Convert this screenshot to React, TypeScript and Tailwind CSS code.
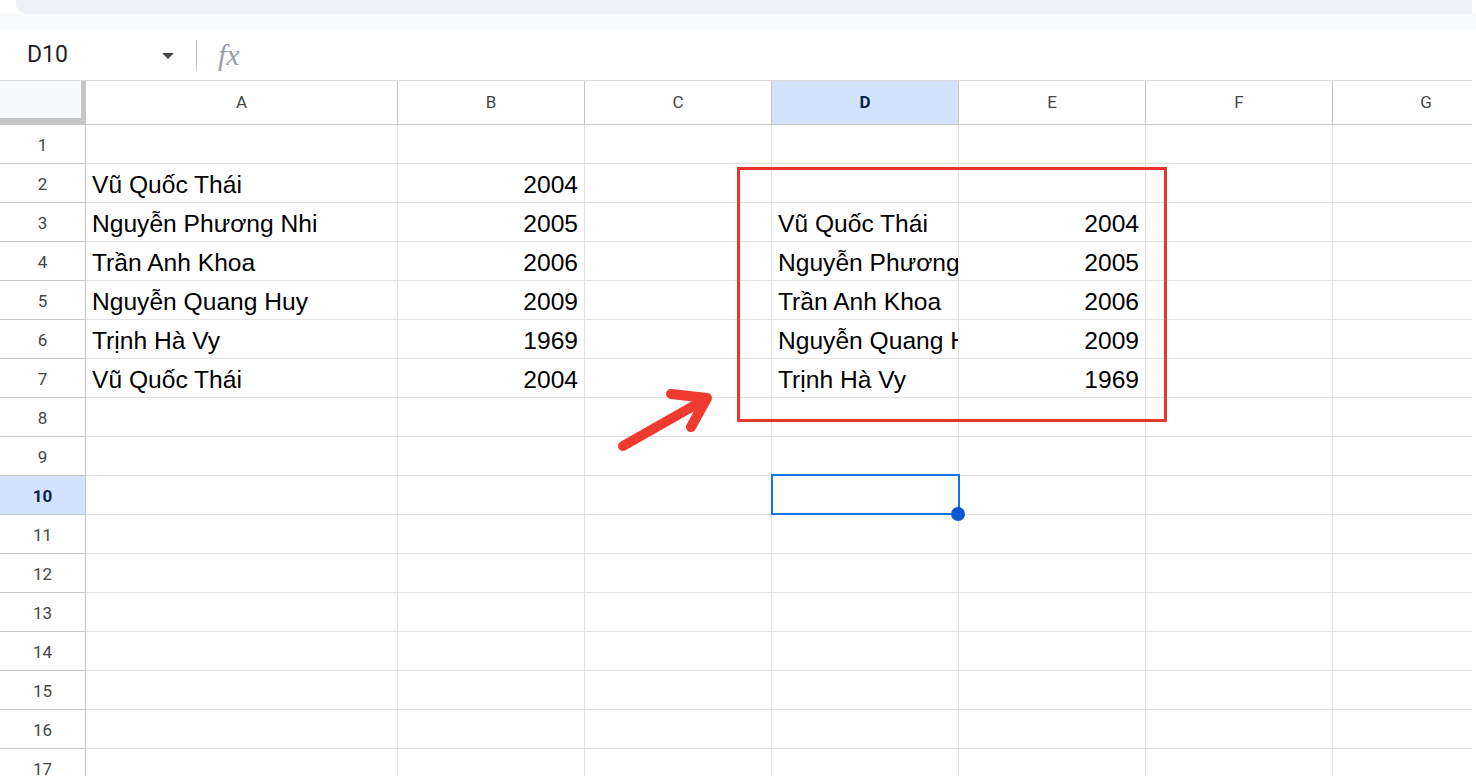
import React from "react";

const columns = [
  { key: "A", width: "w-[312px]" },
  { key: "B", width: "w-[187px]" },
  { key: "C", width: "w-[187px]" },
  { key: "D", width: "w-[187px]" },
  { key: "E", width: "w-[187px]" },
  { key: "F", width: "w-[187px]" },
  { key: "G", width: "w-[187px]" },
];

type Cell = { text: string; align?: "left" | "right" };

// sheet contents keyed by row number, then column letter
const data: Record<number, Record<string, Cell>> = {
  2: { A: { text: "Vũ Quốc Thái" }, B: { text: "2004", align: "right" } },
  3: {
    A: { text: "Nguyễn Phương Nhi" },
    B: { text: "2005", align: "right" },
    D: { text: "Vũ Quốc Thái" },
    E: { text: "2004", align: "right" },
  },
  4: {
    A: { text: "Trần Anh Khoa" },
    B: { text: "2006", align: "right" },
    D: { text: "Nguyễn Phương Nhi" },
    E: { text: "2005", align: "right" },
  },
  5: {
    A: { text: "Nguyễn Quang Huy" },
    B: { text: "2009", align: "right" },
    D: { text: "Trần Anh Khoa" },
    E: { text: "2006", align: "right" },
  },
  6: {
    A: { text: "Trịnh Hà Vy" },
    B: { text: "1969", align: "right" },
    D: { text: "Nguyễn Quang Huy" },
    E: { text: "2009", align: "right" },
  },
  7: {
    A: { text: "Vũ Quốc Thái" },
    B: { text: "2004", align: "right" },
    D: { text: "Trịnh Hà Vy" },
    E: { text: "1969", align: "right" },
  },
};

const rows = Array.from({ length: 17 }, (_, i) => i + 1);

const App = () => {
  return (
    <div className="relative w-[1476px] h-[776px] overflow-hidden bg-white font-['Liberation_Sans',Arial,sans-serif]">
      {/* top chrome strip */}
      <div className="h-[14px] ml-[16px] mr-[4px] bg-[#eef1f8] rounded-bl-[10px]"></div>
      <div className="h-[16px] bg-[#f9fafd]"></div>

      {/* name box + formula bar */}
      <div className="h-[50px] flex items-center">
        <div className="w-[196px] flex items-center pl-[27px] pr-[22px] justify-between">
          <span className="text-[23px] text-[#1f1f1f] font-['Roboto',sans-serif]">D10</span>
          <span className="w-0 h-0 border-l-[6px] border-r-[6px] border-t-[6px] border-l-transparent border-r-transparent border-t-[#444746] mt-[1px]"></span>
        </div>
        <div className="w-px h-[31px] bg-[#c7c7c7]"></div>
        <span className="ml-[21px] text-[30px] italic text-[#9aa0a6] font-['Liberation_Serif',serif] leading-none">fx</span>
      </div>

      <div className="w-[1472px] overflow-hidden">
        {/* column headers */}
        <div className="flex h-[45px] border-t border-[#dadce0] w-max">
          <div className="w-[86px] h-full bg-[#f8f9fa] border-r-[5px] border-b-[7px] border-[#c4c7c5]"></div>
          {columns.map((c) => (
            <div
              key={c.key}
              className={`${c.width} h-full flex items-center justify-center border-r border-b border-[#c7c7c7] text-[17px] font-['Roboto',sans-serif] ${
                c.key === "D" ? "bg-[#d3e3fd] text-[#0b1f4b] font-bold" : "text-[#444746]"
              }`}
            >
              {c.key}
            </div>
          ))}
        </div>

        {/* grid rows */}
        {rows.map((r) => (
          <div key={r} className="flex h-[39px] w-max">
            <div
              className={`w-[86px] h-full flex items-center justify-center pt-[3px] border-r border-b border-[#c7c7c7] text-[17px] font-['Roboto',sans-serif] ${
                r === 10 ? "bg-[#d3e3fd] text-[#0b1f4b] font-bold" : "text-[#444746]"
              }`}
            >
              {r}
            </div>
            {columns.map((c) => {
              const cell = data[r]?.[c.key];
              return (
                <div
                  key={c.key}
                  className={`${c.width} h-full flex items-center pt-[4px] px-[6px] overflow-hidden whitespace-nowrap border-r border-b border-[#e1e1e1] text-[24.6px] text-black ${
                    cell?.align === "right" ? "justify-end" : "justify-start"
                  }`}
                >
                  {cell?.text}
                </div>
              );
            })}
          </div>
        ))}
      </div>

      {/* red highlight box */}
      <div className="absolute left-[737px] top-[167px] w-[430px] h-[255px] border-[3px] border-[#e8362d]"></div>

      {/* red arrow */}
      <svg className="absolute left-[600px] top-[380px]" width="130" height="80" viewBox="0 0 130 80">
        <g stroke="#ee3a2f" strokeWidth="10" strokeLinecap="round" strokeLinejoin="round" fill="none">
          <line x1="23" y1="66" x2="104" y2="20" />
          <polyline points="71,14 107,18 91,47" />
        </g>
      </svg>

      {/* active cell D10 */}
      <div className="absolute left-[771px] top-[474px] w-[189px] h-[41px] border-2 border-[#1a73e8]"></div>
      <div className="absolute left-[951px] top-[507px] w-[14px] h-[14px] rounded-full bg-[#0b57d0]"></div>
    </div>
  );
};

export default App;
